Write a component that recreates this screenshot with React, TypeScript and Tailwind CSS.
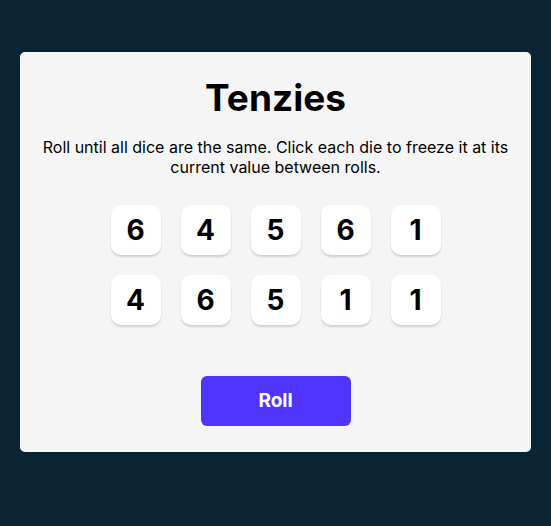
const dice = [6, 4, 5, 6, 1, 4, 6, 5, 1, 1];

const Die = ({ value }: { value: number }) => (
  <button className="flex items-center justify-center w-[50px] h-[50px] rounded-[10px] bg-white shadow-[0_2px_2px_rgba(0,0,0,0.15)] text-[28px] font-bold text-black">
    {value}
  </button>
);

export default function App() {
  return (
    <div
      className="min-h-screen bg-[#0B2434] px-[20px] pt-[52px] pb-[74px]"
      style={{ fontFamily: "Inter, 'Noto Sans', sans-serif" }}
    >
      <main className="flex flex-col items-center h-[400px] rounded-[5px] bg-[#F5F5F5] px-[20px] pt-[23px] pb-[26px]">
        <h1 className="text-[37px] leading-[45px] font-bold text-black">Tenzies</h1>
        <p className="mt-[17px] text-[16px] leading-[20px] text-center text-black">
          Roll until all dice are the same. Click each die to freeze it at its current value between rolls.
        </p>
        <div className="mt-[28px] grid grid-cols-5 gap-[20px]">
          {dice.map((d, i) => (
            <Die key={i} value={d} />
          ))}
        </div>
        <button className="mt-[51px] w-[150px] h-[50px] rounded-[6px] bg-[#5035FF] text-white text-[19px] font-bold">
          Roll
        </button>
      </main>
    </div>
  );
}
